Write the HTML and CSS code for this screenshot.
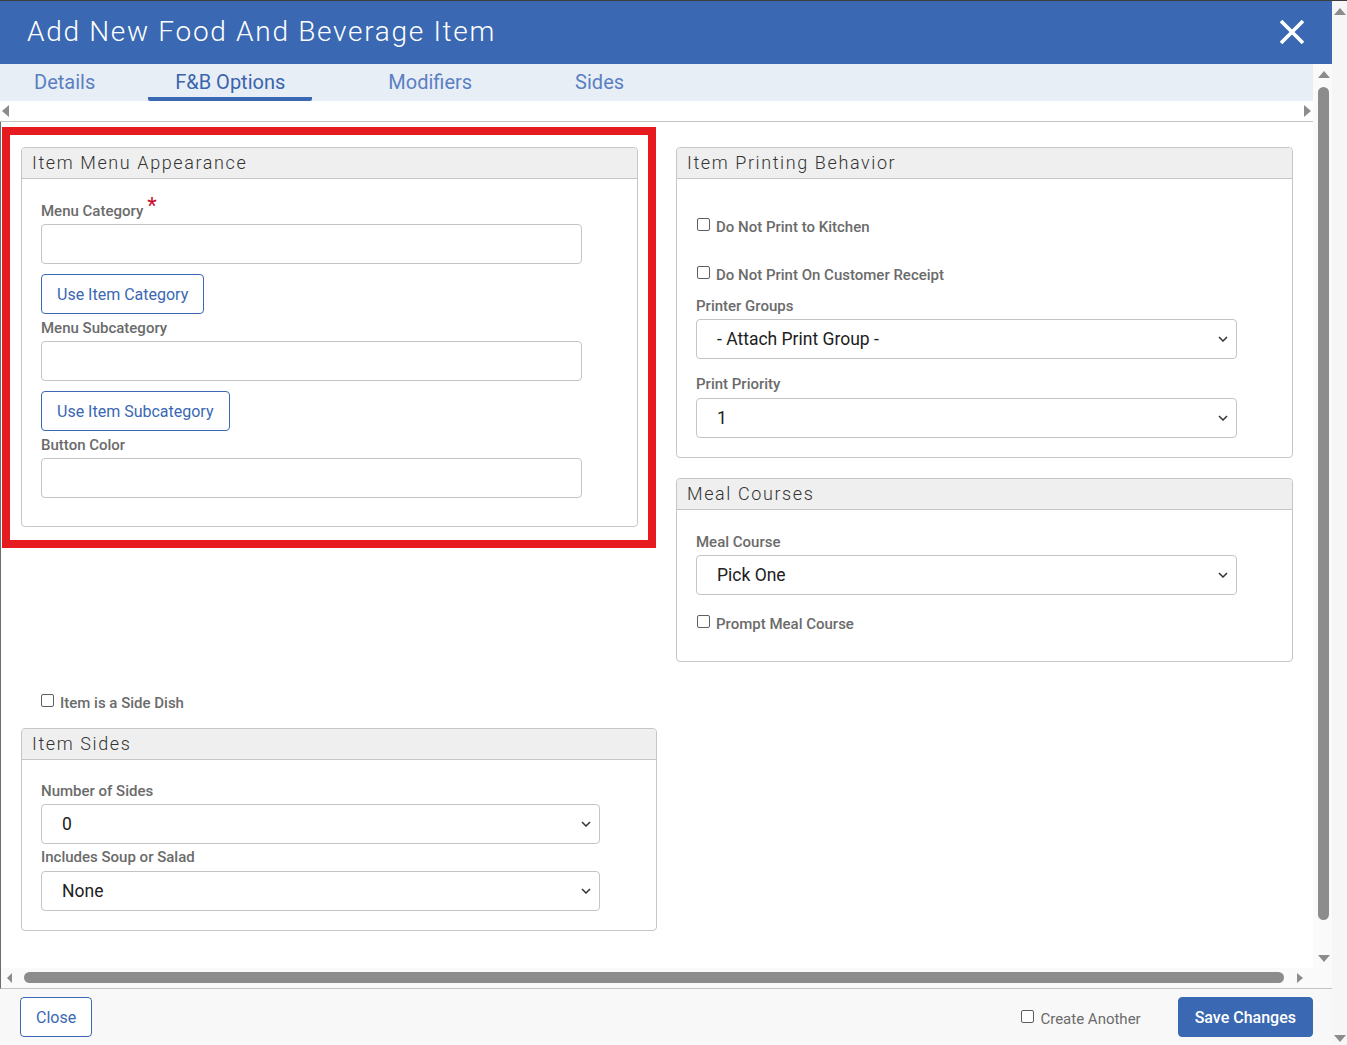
FILE: index.html
```html
<!DOCTYPE html>
<html lang="en">
<head>
  <meta charset="UTF-8">
  <meta name="viewport" content="width=device-width, initial-scale=1.0">
  <title>Add New Food And Beverage Item</title>
  <link rel="stylesheet" href="styles.css">
</head>
<body>
  <div class="page">
    <div class="modal">
      <div class="modal-header">
        <h1 class="modal-title">Add New Food And Beverage Item</h1>
        <svg class="close-icon" viewBox="0 0 28 28">
          <path d="M3 3L25 25M25 3L3 25"/>
        </svg>
      </div>

      <div class="modal-main">
        <div class="scroll-pane">
          <div class="tabs">
            <span class="tab">Details</span>
            <span class="tab tab-active">F&amp;B Options</span>
            <span class="tab">Modifiers</span>
            <span class="tab">Sides</span>
          </div>
          <div class="tab-arrows">
            <span class="arrow arrow-left"></span>
            <span class="arrow arrow-right"></span>
          </div>

          <div class="content">
            <!-- left column -->
            <div class="col-left">
              <div class="highlight">
                <div class="panel">
                  <div class="panel-header">Item Menu Appearance</div>
                  <div class="panel-body body-appearance">
                    <label class="field-label">Menu Category<span class="required">*</span></label>
                    <input class="text-input" type="text">
                    <button class="btn btn-outline">Use Item Category</button>
                    <label class="field-label">Menu Subcategory</label>
                    <input class="text-input" type="text">
                    <button class="btn btn-outline">Use Item Subcategory</button>
                    <label class="field-label">Button Color</label>
                    <input class="text-input" type="text">
                  </div>
                </div>
              </div>
            </div>

            <!-- right column -->
            <div class="col-right">
              <div class="panel">
                <div class="panel-header">Item Printing Behavior</div>
                <div class="panel-body body-printing">
                  <div class="check-row check-first"><span class="checkbox"></span><span class="check-text">Do Not Print to Kitchen</span></div>
                  <div class="check-row check-second"><span class="checkbox"></span><span class="check-text">Do Not Print On Customer Receipt</span></div>
                  <label class="field-label label-printer">Printer Groups</label>
                  <div class="select-box">
                    <span>- Attach Print Group -</span>
                    <svg class="chevron" viewBox="0 0 10 6"><polyline points="1,1 5,5 9,1"/></svg>
                  </div>
                  <label class="field-label label-priority">Print Priority</label>
                  <div class="select-box">
                    <span>1</span>
                    <svg class="chevron" viewBox="0 0 10 6"><polyline points="1,1 5,5 9,1"/></svg>
                  </div>
                </div>
              </div>

              <div class="panel panel-courses">
                <div class="panel-header">Meal Courses</div>
                <div class="panel-body body-courses">
                  <label class="field-label">Meal Course</label>
                  <div class="select-box">
                    <span>Pick One</span>
                    <svg class="chevron" viewBox="0 0 10 6"><polyline points="1,1 5,5 9,1"/></svg>
                  </div>
                  <div class="check-row check-prompt"><span class="checkbox"></span><span class="check-text">Prompt Meal Course</span></div>
                </div>
              </div>
            </div>

            <!-- left column, lower part -->
            <div class="col-left-lower">
              <div class="check-row side-dish"><span class="checkbox"></span><span class="check-text">Item is a Side Dish</span></div>
              <div class="panel panel-sides">
                <div class="panel-header">Item Sides</div>
                <div class="panel-body body-sides">
                  <label class="field-label">Number of Sides</label>
                  <div class="select-box">
                    <span>0</span>
                    <svg class="chevron" viewBox="0 0 10 6"><polyline points="1,1 5,5 9,1"/></svg>
                  </div>
                  <label class="field-label label-soup">Includes Soup or Salad</label>
                  <div class="select-box">
                    <span>None</span>
                    <svg class="chevron" viewBox="0 0 10 6"><polyline points="1,1 5,5 9,1"/></svg>
                  </div>
                </div>
              </div>
            </div>
          </div>
        </div>

        <div class="vscroll">
          <span class="arrow arrow-up"></span>
          <span class="vthumb"></span>
          <span class="arrow arrow-down"></span>
        </div>
      </div>

      <div class="hscroll">
        <span class="arrow arrow-left small"></span>
        <span class="hthumb"></span>
        <span class="arrow arrow-right small"></span>
      </div>

      <div class="modal-footer">
        <button class="btn btn-outline btn-close">Close</button>
        <div class="footer-right">
          <div class="check-row create-another"><span class="checkbox"></span><span class="check-text">Create Another</span></div>
          <button class="btn btn-primary">Save Changes</button>
        </div>
      </div>
    </div>

    <div class="page-scroll">
      <span class="arrow arrow-up"></span>
      <span class="arrow arrow-down"></span>
    </div>
  </div>
</body>
</html>
```

FILE: styles.css
```css
:root {
  --blue: #3a68b2;
  --tab-blue: #5a80c2;
  --border: #c6c6c6;
  --label: #6b6b6b;
  --thumb: #8c8c8c;
  --highlight: #e51b1f;
}

* {
  box-sizing: border-box;
}

body {
  margin: 0;
  font-family: Roboto, "Noto Sans", Arial, sans-serif;
  background: #fff;
  color: #222;
}

.page {
  display: flex;
  height: 1045px;
  border-top: 1px solid #3d3d3d;
  overflow: hidden;
}

.modal {
  width: 1332px;
  display: flex;
  flex-direction: column;
}

/* header */
.modal-header {
  height: 63px;
  flex-shrink: 0;
  background: var(--blue);
  display: flex;
  align-items: center;
  justify-content: space-between;
  padding: 0 26px 2px 27px;
}

.modal-title {
  margin: 0;
  font-size: 28px;
  font-weight: 300;
  letter-spacing: 1.7px;
  color: #fff;
}

.close-icon {
  width: 28px;
  height: 28px;
  fill: none;
  stroke: #fff;
  stroke-width: 3.6;
}

/* body with its scrollbars */
.modal-main {
  height: 904px;
  display: flex;
}

.scroll-pane {
  flex: 1;
  display: flex;
  flex-direction: column;
  overflow: hidden;
}

.tabs {
  height: 37px;
  flex-shrink: 0;
  background: #e8eef6;
  display: flex;
  padding-left: 7px;
}

.tab {
  padding: 4px 27px 0;
  font-size: 20px;
  color: var(--tab-blue);
  border-bottom: 4px solid transparent;
  line-height: 28px;
}

.tab + .tab {
  margin-left: 49px;
}

.tab-active {
  color: #3a64ac;
  border-bottom-color: var(--blue);
  border-radius: 0 0 2px 2px;
}

.tab.tab-active {
  margin-left: 26px;
}

.tab-arrows {
  height: 21px;
  flex-shrink: 0;
  display: flex;
  align-items: center;
  justify-content: space-between;
  padding: 0 2px 1px 2px;
  border-bottom: 1px solid #c4c4c4;
}

.arrow {
  width: 0;
  height: 0;
  display: block;
  flex-shrink: 0;
}

.arrow-left {
  border-top: 6px solid transparent;
  border-bottom: 6px solid transparent;
  border-right: 7px solid var(--thumb);
}

.arrow-right {
  border-top: 6px solid transparent;
  border-bottom: 6px solid transparent;
  border-left: 7px solid var(--thumb);
}

.arrow-up {
  border-left: 6px solid transparent;
  border-right: 6px solid transparent;
  border-bottom: 7px solid var(--thumb);
}

.arrow-down {
  border-left: 6px solid transparent;
  border-right: 6px solid transparent;
  border-top: 7px solid var(--thumb);
}

.arrow-left.small {
  border-top-width: 5px;
  border-bottom-width: 5px;
  border-right-width: 5px;
}

.arrow-right.small {
  border-top-width: 5px;
  border-bottom-width: 5px;
  border-left-width: 6px;
}

.vscroll {
  width: 19px;
  flex-shrink: 0;
  background: #fafafa;
  display: flex;
  flex-direction: column;
  align-items: center;
  padding: 7px 0 6px 2px;
}

.vthumb {
  flex: 1;
  width: 11px;
  margin: 9px 0 35px;
  border-radius: 6px;
  background: var(--thumb);
}

.hscroll {
  height: 21px;
  flex-shrink: 0;
  display: flex;
  align-items: center;
  padding: 0 29px 1px 6px;
  border-left: 1px solid #6d6d6d;
  border-bottom: 1px solid #c4c4c4;
  background: #fafafa;
}

.hthumb {
  flex: 1;
  height: 11px;
  margin: 0 13px 0 12px;
  border-radius: 6px;
  background: var(--thumb);
}

/* content grid */
.content {
  flex: 1;
  display: grid;
  grid-template-columns: 655px 1fr;
  align-content: start;
  align-items: start;
  padding: 5px 0 0 1px;
  border-left: 1px solid #6d6d6d;
}

.highlight {
  width: 654px;
  border: 8px solid var(--highlight);
  padding: 12px 10px 13px 11px;
}

.col-right {
  padding: 20px 20px 20px 19px;
}

.col-left-lower {
  grid-column: 1;
}

.panel {
  border: 1px solid var(--border);
  border-radius: 4px;
  background: #fff;
}

.panel-header {
  height: 31px;
  padding-left: 10px;
  background: #efefef;
  border-bottom: 1px solid var(--border);
  border-radius: 4px 4px 0 0;
  font-size: 18px;
  font-weight: 300;
  line-height: 30px;
  letter-spacing: 1.6px;
  color: #333;
}

.panel-body {
  padding: 22px 20px 20px 19px;
}

.body-appearance {
  padding-bottom: 28px;
}

.body-printing {
  padding-top: 21px;
  padding-bottom: 19px;
}

.body-courses {
  padding-bottom: 27px;
}

.body-sides {
  padding-top: 21px;
  padding-bottom: 19px;
}

.panel-courses {
  margin-top: 20px;
}

.side-dish {
  margin: 11px 0 0 38px;
}

.panel-sides {
  margin-left: 19px;
  margin-top: 15px;
}

/* form parts */
.field-label {
  display: block;
  font-size: 15px;
  font-weight: 500;
  line-height: 20px;
  color: var(--label);
  margin-bottom: 3px;
}

.required {
  color: #c8102e;
  font-size: 22px;
  font-weight: 400;
  line-height: 0;
  position: relative;
  top: -3px;
  margin-left: 4px;
}

.label-printer {
  margin-top: 11px;
}

.label-priority {
  margin-top: 15px;
  margin-bottom: 4px;
}

.label-soup {
  margin-top: 3px;
  margin-bottom: 4px;
}

.text-input {
  display: block;
  width: 94%;
  height: 40px;
  margin: 0;
  border: 1px solid #c4c4c4;
  border-radius: 4px;
  background: #fff;
  font: inherit;
}

.select-box {
  width: 94%;
  height: 40px;
  display: flex;
  align-items: center;
  justify-content: space-between;
  padding: 0 8px 0 20px;
  border: 1px solid #c4c4c4;
  border-radius: 4px;
  font-size: 17.5px;
  color: #212121;
}

.chevron {
  width: 10px;
  height: 6px;
  fill: none;
  stroke: #333;
  stroke-width: 1.5;
}

.btn {
  height: 40px;
  padding: 0 15px;
  border-radius: 4px;
  font-family: inherit;
  font-size: 16px;
  cursor: pointer;
}

.btn-outline {
  display: block;
  background: #fff;
  color: var(--blue);
  border: 1px solid var(--blue);
}

.panel-body .btn-outline {
  margin: 10px 0 4px;
}

.btn-primary {
  background: var(--blue);
  color: #fff;
  border: 1px solid var(--blue);
  font-weight: 500;
  padding: 0 16px;
}

.check-row {
  display: flex;
  align-items: flex-start;
  line-height: 20px;
}

.checkbox {
  width: 13px;
  height: 13px;
  margin: 1px 0 0 1px;
  border: 1px solid #5f5f5f;
  border-radius: 2px;
  background: #fff;
  flex-shrink: 0;
}

.check-text {
  margin-left: 6px;
  font-size: 15px;
  font-weight: 500;
  color: var(--label);
}

.check-first {
  margin-top: 17px;
}

.check-second {
  margin-top: 28px;
}

.check-prompt {
  margin-top: 19px;
}

/* footer */
.modal-footer {
  flex: 1;
  display: flex;
  justify-content: space-between;
  align-items: flex-start;
  padding: 8px 19px 0 20px;
  background: #f8f8f8;
}

.btn-close {
  padding: 0 15px;
}

.footer-right {
  display: flex;
  align-items: center;
}

.create-another {
  margin: 4px 37px 0 0;
}

.create-another .check-text {
  font-size: 15px;
  font-weight: 400;
}

/* outer page scrollbar */
.page-scroll {
  width: 15px;
  background: #f6f6f6;
  display: flex;
  flex-direction: column;
  align-items: center;
  justify-content: space-between;
  padding: 7px 0 3px 1px;
}
```
